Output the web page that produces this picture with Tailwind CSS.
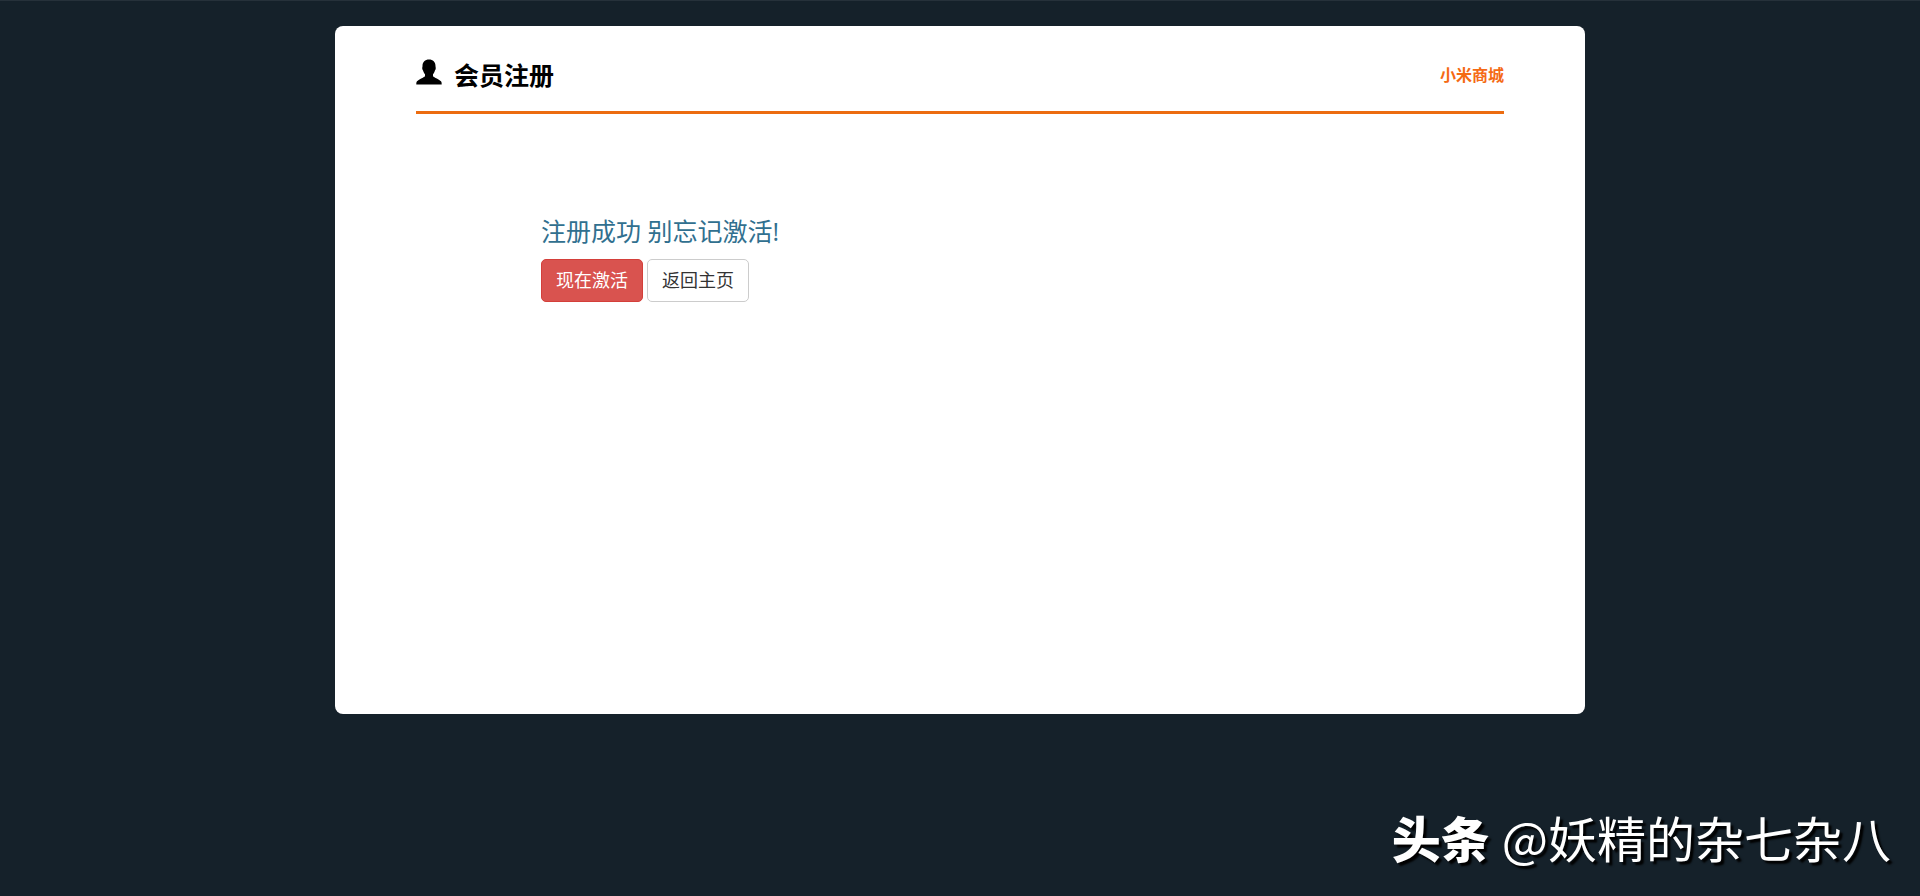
<!DOCTYPE html>
<html lang="zh-CN">
<head>
  <meta charset="UTF-8" />
  <meta name="viewport" content="width=device-width, initial-scale=1.0" />
  <title>会员注册</title>
  <script src="https://cdn.jsdelivr.net/npm/@tailwindcss/browser@4"></script>
  <style>
    body { font-family: 'Open Sans', 'Noto Sans CJK SC', sans-serif; }
  </style>
</head>
<body class="min-h-screen bg-[#15212a] border-t border-[#26313a] flex flex-col">
  <!-- 注册卡片 -->
  <main class="w-full max-w-[1250px] min-h-[688px] mx-auto mt-[25px] px-[81px] bg-white rounded-lg">
    <header class="flex items-center justify-between h-[88px] pt-3 border-b-3 border-[#ec6c10]">
      <h1 class="flex items-center gap-3 text-[25px] leading-8 font-bold text-black">
        <svg class="w-[26px] h-[26px] mb-1.5" viewBox="0 0 26 26" fill="currentColor" aria-hidden="true">
          <path d="M13 .5C17 .5 19.500 3 19.500 7C19.500 8 19.900 8.500 19.700 10C19.500 11 19 11.200 18.700 12.200C18.200 13.600 17.600 14.400 17 15.200V17.200C18 18.200 23.500 20.800 25 22.200C25.700 22.900 25.700 24.300 25.700 25.500H.3C.3 24.300 .3 22.900 1 22.200C2.500 20.800 8 18.200 9 17.200V15.200C8.400 14.400 7.800 13.600 7.300 12.200C7 11.200 6.500 11 6.300 10C6.100 8.500 6.500 8 6.500 7C6.500 3 9 .5 13 .5Z" />
        </svg>
        会员注册
      </h1>
      <a href="#" class="text-base font-bold text-[#f56a14]">小米商城</a>
    </header>

    <!-- 注册结果 -->
    <section class="pt-[99px] pl-[125px]">
      <p class="text-[25px] leading-9 text-[#31708f]">注册成功 别忘记激活!</p>
      <div class="flex gap-1 mt-2.5">
        <button type="button" class="h-[43px] px-3.5 rounded-[5px] border border-[#d43f3a] bg-[#d9534f] pb-0.5 text-lg text-white hover:bg-[#c9302c]">现在激活</button>
        <button type="button" class="h-[43px] px-3.5 rounded-[5px] border border-[#cccccc] bg-white pb-0.5 text-lg text-[#333333] hover:bg-gray-100">返回主页</button>
      </div>
    </section>
  </main>

  <!-- 署名 -->
  <footer class="flex items-center justify-end gap-3 mt-auto pr-[29px] pb-6 font-['Noto_Sans_CJK_SC',sans-serif] text-[49px] leading-[70px] text-white text-shadow-[3px_3px_2px_#000000]">
    <span class="font-black">头条</span>
    <span>@妖精的杂七杂八</span>
  </footer>
</body>
</html>
